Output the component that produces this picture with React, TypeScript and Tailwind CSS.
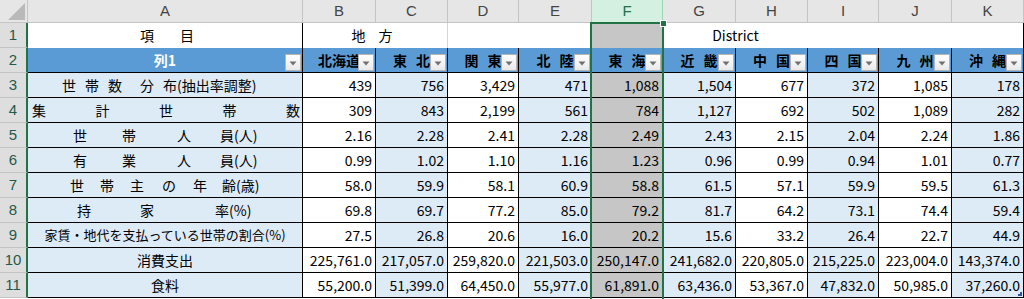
import React from "react";

type Seg = [string, number];

const letters = ["A", "B", "C", "D", "E", "F", "G", "H", "I", "J", "K"];
const heads: string[][] = [
  ["北海道"],
  ["東", "北"],
  ["関", "東"],
  ["北", "陸"],
  ["東", "海"],
  ["近", "畿"],
  ["中", "国"],
  ["四", "国"],
  ["九", "州"],
  ["沖", "縄"],
];

const data: string[][] = [
  ["439", "756", "3,429", "471", "1,088", "1,504", "677", "372", "1,085", "178"],
  ["309", "843", "2,199", "561", "784", "1,127", "692", "502", "1,089", "282"],
  ["2.16", "2.28", "2.41", "2.28", "2.49", "2.43", "2.15", "2.04", "2.24", "1.86"],
  ["0.99", "1.02", "1.10", "1.16", "1.23", "0.96", "0.99", "0.94", "1.01", "0.77"],
  ["58.0", "59.9", "58.1", "60.9", "58.8", "61.5", "57.1", "59.9", "59.5", "61.3"],
  ["69.8", "69.7", "77.2", "85.0", "79.2", "81.7", "64.2", "73.1", "74.4", "59.4"],
  ["27.5", "26.8", "20.6", "16.0", "20.2", "15.6", "33.2", "26.4", "22.7", "44.9"],
  ["225,761.0", "217,057.0", "259,820.0", "221,503.0", "250,147.0", "241,682.0", "220,805.0", "215,225.0", "223,004.0", "143,374.0"],
  ["55,200.0", "51,399.0", "64,450.0", "55,977.0", "61,891.0", "63,436.0", "53,367.0", "47,832.0", "50,985.0", "37,260.0"],
];

type Label =
  | { kind: "segs"; segs: Seg[] }
  | { kind: "justify"; chars: string[] }
  | { kind: "center"; text: string; small?: boolean };

const labels: Label[] = [
  { kind: "segs", segs: [["世", 34], ["帯", 57], ["数", 80], ["分", 112], ["布", 135], ["(抽出率調整)", 149]] },
  { kind: "justify", chars: ["集", "計", "世", "帯", "数"] },
  { kind: "segs", segs: [["世", 45], ["帯", 94], ["人", 149], ["員(人)", 192]] },
  { kind: "segs", segs: [["有", 45], ["業", 94], ["人", 149], ["員(人)", 192]] },
  { kind: "segs", segs: [["世", 42], ["帯", 72], ["主", 102], ["の", 134], ["年", 165], ["齢(歳)", 194]] },
  { kind: "segs", segs: [["持", 49], ["家", 112], ["率(%)", 187]] },
  { kind: "center", text: "家賃・地代を支払っている世帯の割合(%)", small: true },
  { kind: "center", text: "消費支出" },
  { kind: "center", text: "食料" },
];

function Spaced({ segs }: { segs: Seg[] }) {
  return (
    <div className="flex h-full items-center">
      {segs.map(([t, x], i) => {
        const next = segs[i + 1]?.[1];
        const style: React.CSSProperties = {};
        if (i === 0) style.marginLeft = x;
        if (next !== undefined) style.width = next - x;
        return (
          <span key={i} style={style} className="shrink-0 whitespace-nowrap">
            {t}
          </span>
        );
      })}
    </div>
  );
}

function LabelCell({ label }: { label: Label }) {
  if (label.kind === "segs") return <Spaced segs={label.segs} />;
  if (label.kind === "justify")
    return (
      <div className="flex h-full items-center justify-between pl-[4px] pr-[2px]">
        {label.chars.map((c, i) => (
          <span key={i}>{c}</span>
        ))}
      </div>
    );
  return (
    <div className={`flex h-full items-center justify-center whitespace-nowrap ${label.small ? "text-[13px]" : ""}`}>
      {label.text}
    </div>
  );
}

function Drop() {
  return (
    <span className="absolute right-[1px] bottom-[1px] flex h-[17px] w-[16px] items-center justify-center border border-[#b4b4b4] bg-linear-to-b from-[#ffffff] to-[#e9e9e9]">
      <svg width="8" height="5" viewBox="0 0 8 5" className="mt-[2px]">
        <path d="M0.5 0.5h7L4 4.5z" fill="#707070" />
      </svg>
    </span>
  );
}

const jp = "font-['Noto_Sans_CJK_JP',sans-serif]";

export default function App() {
  return (
    <div className="relative h-[299px] w-[1024px] overflow-hidden bg-white">
      <div
        className={`grid grid-cols-[28px_275px_73px_72px_71px_73px_71px_73px_72px_71px_73px_72px] grid-rows-[23px_repeat(11,25px)] text-[14px] text-black ${jp}`}
      >
        {/* column header row */}
        <div className="relative border-r border-b border-[#c4c4c4] bg-[#e6e6e6]">
          <svg className="absolute left-0 top-0" width="27" height="22" viewBox="0 0 27 22">
            <polygon points="8,20 25,20 25,3" fill="#b9b9b9" />
          </svg>
        </div>
        {letters.map((l) => (
          <div
            key={l}
            className={`flex items-center justify-center border-r border-b font-['Liberation_Sans',sans-serif] text-[15px] ${
              l === "F"
                ? "border-[#9fd5b7] bg-[#d3f0e0] text-[#217346]"
                : "border-[#c4c4c4] bg-[#e6e6e6] text-[#444444]"
            }`}
          >
            {l}
          </div>
        ))}

        {/* row 1 */}
        <div className="flex items-center justify-center border-r-2 border-b border-r-[#217346] border-b-[#c4c4c4] bg-[#dedede] font-['Liberation_Sans',sans-serif] text-[15px] text-[#1f5a4c]">
          1
        </div>
        <div className="border-r border-black bg-white">
          <Spaced segs={[["項", 112], ["目", 152]]} />
        </div>
        <div className="col-span-2 flex items-center justify-center border-r border-[#d4d4d4] bg-white pr-[6px]">
          <span>地</span>
          <span className="ml-[13px]">方</span>
        </div>
        <div className="col-span-2 bg-white" />
        <div className="bg-[#c6c6c6]" />
        <div className="col-span-2 flex items-center justify-center bg-white">District</div>
        <div className="col-span-3 border-r border-black bg-white" />

        {/* row 2 */}
        <div className="flex items-center justify-center border-r-2 border-b border-r-[#217346] border-b-[#c4c4c4] bg-[#dedede] font-['Liberation_Sans',sans-serif] text-[15px] text-[#1f5a4c]">
          2
        </div>
        <div className="relative flex items-center justify-center border-r border-b border-black bg-[#5b9bd5] font-bold text-white">
          列1
          <Drop />
        </div>
        {heads.map((h, i) => (
          <div
            key={i}
            className="relative flex items-center justify-center gap-[9px] border-r border-b border-black bg-[#5b9bd5] font-bold text-black"
          >
            {h.map((c, j) => (
              <span key={j}>{c}</span>
            ))}
            <Drop />
          </div>
        ))}

        {/* data rows */}
        {data.map((row, r) => (
          <React.Fragment key={r}>
            <div className="flex items-center justify-center border-r-2 border-b border-r-[#217346] border-b-[#c4c4c4] bg-[#dedede] font-['Liberation_Sans',sans-serif] text-[15px] text-[#1f5a4c]">
              {r + 3}
            </div>
            <div className="border-r border-b border-black bg-[#ddebf7]">
              <LabelCell label={labels[r]} />
            </div>
            {row.map((v, c) => (
              <div
                key={c}
                className={`relative flex items-center justify-end border-r border-b border-black pr-[3px] pt-[1px] ${
                  c === 4 ? "bg-[#c6c6c6]" : c % 2 === 1 ? "bg-[#ddebf7]" : "bg-white"
                }`}
              >
                {v}
                {r === data.length - 1 && c === row.length - 1 && (
                  <span className="absolute right-[1px] bottom-[1px] h-[4px] w-[4px] border-r-2 border-b-2 border-[#2f5597]" />
                )}
              </div>
            ))}
          </React.Fragment>
        ))}
      </div>

      {/* selection outline on column F */}
      <div className="pointer-events-none absolute left-[590px] top-[22px] h-[280px] w-[74px] border-x-2 border-t-2 border-[#217346]" />
      <div className="pointer-events-none absolute left-[660px] top-[20px] h-[7px] w-[7px] border border-white bg-[#217346]" />
    </div>
  );
}
